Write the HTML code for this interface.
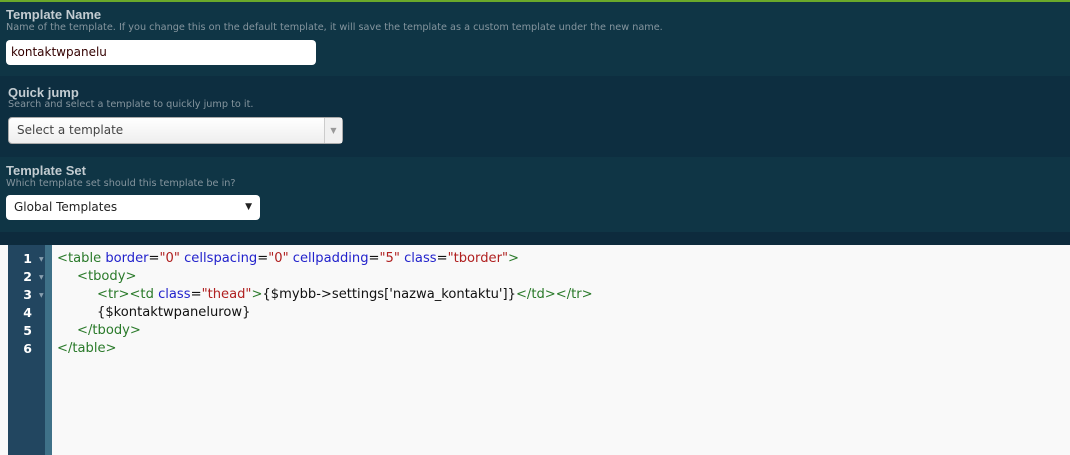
<!DOCTYPE html>
<html><head><style>
*{margin:0;padding:0;box-sizing:border-box}
body{width:1070px;height:455px;overflow:hidden;background:#0d2b3d;font-family:"DejaVu Sans",Verdana,sans-serif;position:relative}
.sec{position:absolute;left:0;width:1070px}
.t{position:absolute;font-weight:bold;font-size:13px;color:#c3ccd1;font-family:"Liberation Sans",sans-serif}
.d{position:absolute;font-size:9.7px;color:#85959e}
.box{position:absolute;background:#fff;border-radius:4px;font-size:12px;color:#222;padding-left:8px}
.code{position:absolute;left:57px;top:250px;font-size:13.1px;line-height:18px;white-space:pre;color:#111}
.i1{padding-left:20px}.i2{padding-left:40px}
.ln{position:absolute;left:8px;top:250px;width:37px;font-size:12.5px;line-height:18px;color:#fff;text-align:right;padding-right:13px;font-weight:bold}
.tg{color:#2a7a2a}.at{color:#2222cc}.st{color:#b02020}
.ar{position:absolute;font-size:6px;color:#8aa0b0}
</style></head><body>
<div class="sec" style="top:0;height:2px;background:#6aa92a"></div>
<div class="sec" style="top:2px;height:74px;background:#0f3545"></div>
<div class="sec" style="top:76px;height:81px;background:#0d2e40"></div>
<div class="sec" style="top:157px;height:75px;background:#0f3545"></div>
<div class="t" style="left:6px;top:7px">Template Name</div>
<div class="d" style="left:6px;top:22px">Name of the template. If you change this on the default template, it will save the template as a custom template under the new name.</div>
<div class="box" style="left:6px;top:40px;width:310px;height:25px;line-height:25px;padding-left:5px;color:#300">kontaktwpanelu</div>
<div class="t" style="left:8px;top:85px">Quick jump</div>
<div class="d" style="left:8px;top:99px">Search and select a template to quickly jump to it.</div>
<div class="box" style="left:8px;top:117px;width:335px;height:27px;line-height:25px;background:linear-gradient(#fff,#eee);border:1px solid #aaa;color:#444">Select a template<div style="position:absolute;right:0;top:0;width:18px;height:25px;border-left:1px solid #ccc;background:#f0f0f0;color:#999;font-size:8px;text-align:center;line-height:25px">▼</div></div>
<div class="t" style="left:6px;top:163px">Template Set</div>
<div class="d" style="left:6px;top:178px">Which template set should this template be in?</div>
<div class="box" style="left:6px;top:195px;width:254px;height:25px;line-height:25px">Global Templates<span style="position:absolute;right:8px;font-size:9px">▼</span></div>
<div class="sec" style="top:245px;height:210px;background:#f9f9f9"></div>
<div style="position:absolute;left:8px;top:245px;width:37px;height:210px;background:#224660"></div>
<div style="position:absolute;left:45px;top:245px;width:7px;height:210px;background:#3f7188"></div>
<div class="ln">1<br>2<br>3<br>4<br>5<br>6</div>
<div class="ar" style="left:39px;top:256px">▼</div><div class="ar" style="left:39px;top:274px">▼</div><div class="ar" style="left:39px;top:292px">▼</div>
<div class="code"><div><span class="tg">&lt;table</span> <span class="at">border</span>=<span class="st">"0"</span> <span class="at">cellspacing</span>=<span class="st">"0"</span> <span class="at">cellpadding</span>=<span class="st">"5"</span> <span class="at">class</span>=<span class="st">"tborder"</span><span class="tg">&gt;</span></div><div class="i1"><span class="tg">&lt;tbody&gt;</span></div><div class="i2"><span class="tg">&lt;tr&gt;&lt;td</span> <span class="at">class</span>=<span class="st">"thead"</span><span class="tg">&gt;</span>{$mybb-&gt;settings['nazwa_kontaktu']}<span class="tg">&lt;/td&gt;&lt;/tr&gt;</span></div><div class="i2">{$kontaktwpanelurow}</div><div class="i1"><span class="tg">&lt;/tbody&gt;</span></div><div><span class="tg">&lt;/table&gt;</span></div></div>
</body></html>
